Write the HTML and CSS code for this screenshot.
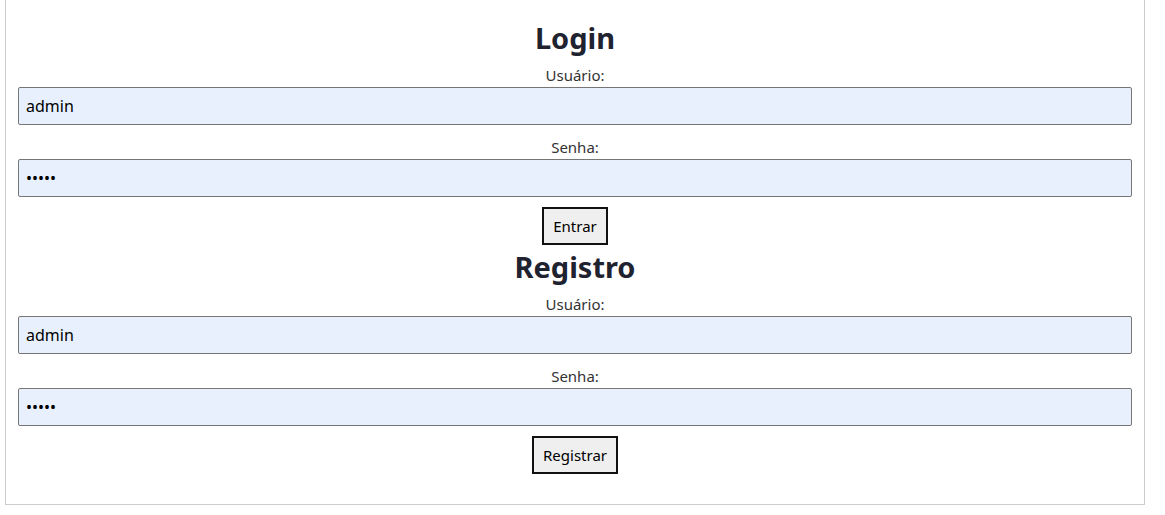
FILE: index.html
```html
<!DOCTYPE html>
<html lang="pt">
<head>
<meta charset="utf-8">
<title>Login</title>
<link rel="stylesheet" href="styles.css">
</head>
<body>
<div class="container">
  <form class="form">
    <h2 class="title">Login</h2>
    <label class="label">Usuário:</label>
    <input class="field" type="text" value="admin">
    <label class="label">Senha:</label>
    <input class="field" type="password" value="admin">
    <button class="btn" type="button">Entrar</button>
  </form>
  <form class="form">
    <h2 class="title">Registro</h2>
    <label class="label">Usuário:</label>
    <input class="field" type="text" value="admin">
    <label class="label">Senha:</label>
    <input class="field" type="password" value="admin">
    <button class="btn" type="button">Registrar</button>
  </form>
</div>
</body>
</html>
```
FILE: styles.css
```css
html, body {
  margin: 0;
  padding: 0;
  background: #fff;
}
body {
  font-family: "Segoe UI", "Noto Sans", "Open Sans", sans-serif;
  color: #212529;
}
.container {
  box-sizing: border-box;
  width: 1140px;
  margin-left: 5px;
  border: 1px solid #cccccc;
  border-top: 0;
  padding: 16px 12px 30px;
}
.form {
  display: flex;
  flex-direction: column;
  align-items: center;
}
.title {
  margin: 0 0 8px;
  font-size: 29px;
  line-height: 43px;
  font-weight: 700;
  color: #1f2330;
}
.label {
  display: block;
  font-size: 15px;
  line-height: 17px;
  padding-bottom: 3px;
  color: #333;
}
.field {
  box-sizing: border-box;
  width: 100%;
  height: 38px;
  margin: 0 0 14px;
  padding: 0 7px;
  border: 1px solid #767676;
  border-radius: 2px;
  background: #e8f0fe;
  font-family: inherit;
  font-size: 16px;
  color: #000;
  outline: none;
}
.field + .btn {
  margin-top: -4px;
}
.btn {
  box-sizing: border-box;
  height: 38px;
  padding: 0 9px;
  border: 2px solid #111;
  border-radius: 0;
  background: #efefef;
  font-family: inherit;
  font-size: 15px;
  color: #000;
}
```
